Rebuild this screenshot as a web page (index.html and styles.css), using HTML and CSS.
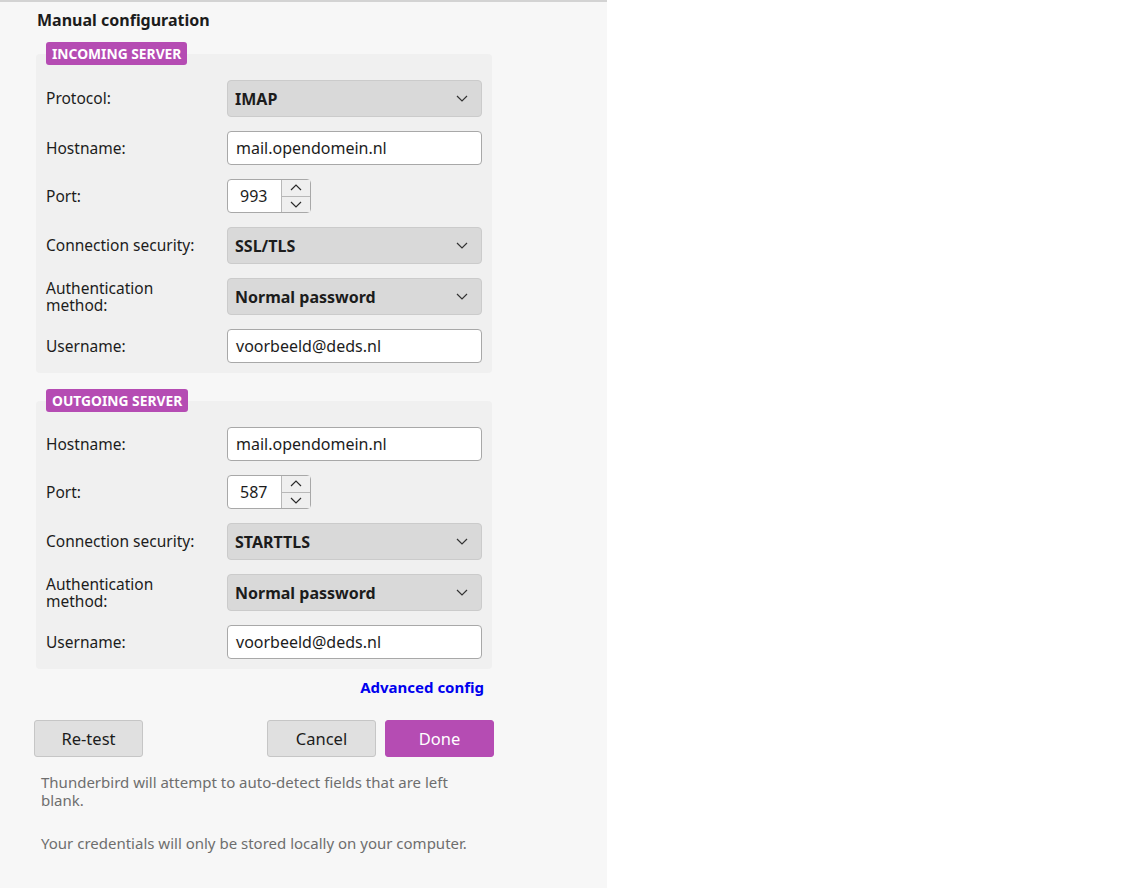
FILE: index.html
```html
<!DOCTYPE html>
<html lang="en">
<head>
    <meta charset="UTF-8">
    <title>Manual configuration</title>
    <link rel="stylesheet" href="styles.css">
</head>
<body>
    <div class="panel">
        <h2 class="title">Manual configuration</h2>

        <fieldset class="server-box">
            <legend class="badge">INCOMING SERVER</legend>
            <div class="rows">
                <div class="row">
                    <label>Protocol:</label>
                    <div class="select">IMAP
                        <svg class="chev" viewBox="0 0 12 7"><path d="M1 1l5 5 5-5"/></svg>
                    </div>
                </div>
                <div class="row">
                    <label>Hostname:</label>
                    <div class="input">mail.opendomein.nl</div>
                </div>
                <div class="row">
                    <label>Port:</label>
                    <div class="port">
                        <span class="port-val">993</span>
                        <span class="spin">
                            <span class="spin-btn"><svg viewBox="0 0 12 7"><path d="M1 6l5-5 5 5"/></svg></span>
                            <span class="spin-btn"><svg viewBox="0 0 12 7"><path d="M1 1l5 5 5-5"/></svg></span>
                        </span>
                    </div>
                </div>
                <div class="row">
                    <label>Connection security:</label>
                    <div class="select">SSL/TLS
                        <svg class="chev" viewBox="0 0 12 7"><path d="M1 1l5 5 5-5"/></svg>
                    </div>
                </div>
                <div class="row">
                    <label>Authentication<br>method:</label>
                    <div class="select">Normal password
                        <svg class="chev" viewBox="0 0 12 7"><path d="M1 1l5 5 5-5"/></svg>
                    </div>
                </div>
                <div class="row">
                    <label>Username:</label>
                    <div class="input">voorbeeld@deds.nl</div>
                </div>
            </div>
        </fieldset>

        <fieldset class="server-box outgoing">
            <legend class="badge">OUTGOING SERVER</legend>
            <div class="rows">
                <div class="row">
                    <label>Hostname:</label>
                    <div class="input">mail.opendomein.nl</div>
                </div>
                <div class="row">
                    <label>Port:</label>
                    <div class="port">
                        <span class="port-val">587</span>
                        <span class="spin">
                            <span class="spin-btn"><svg viewBox="0 0 12 7"><path d="M1 6l5-5 5 5"/></svg></span>
                            <span class="spin-btn"><svg viewBox="0 0 12 7"><path d="M1 1l5 5 5-5"/></svg></span>
                        </span>
                    </div>
                </div>
                <div class="row">
                    <label>Connection security:</label>
                    <div class="select">STARTTLS
                        <svg class="chev" viewBox="0 0 12 7"><path d="M1 1l5 5 5-5"/></svg>
                    </div>
                </div>
                <div class="row">
                    <label>Authentication<br>method:</label>
                    <div class="select">Normal password
                        <svg class="chev" viewBox="0 0 12 7"><path d="M1 1l5 5 5-5"/></svg>
                    </div>
                </div>
                <div class="row">
                    <label>Username:</label>
                    <div class="input">voorbeeld@deds.nl</div>
                </div>
            </div>
        </fieldset>

        <div class="advanced"><a href="#">Advanced config</a></div>

        <div class="buttons">
            <button class="btn">Re-test</button>
            <div class="btn-group">
                <button class="btn">Cancel</button>
                <button class="btn primary">Done</button>
            </div>
        </div>

        <p class="note">Thunderbird will attempt to auto-detect fields that are left blank.</p>
        <p class="note">Your credentials will only be stored locally on your computer.</p>
    </div>
</body>
</html>
```

FILE: styles.css
```css
:root {
    --accent: #b54cb3;
    --panel-bg: #f7f7f7;
    --box-bg: #f0f0f0;
}

body {
    margin: 0;
    background: #fff;
    font-family: "Noto Sans", "Open Sans", sans-serif;
    color: #1c1c1c;
}

.panel {
    width: 607px;
    min-height: 888px;
    background: var(--panel-bg);
    border-top: 2px solid #d3d3d3;
    box-sizing: border-box;
    padding: 8px 0 0 36px;
}

.title {
    margin: 0 0 0 1px;
    font-size: 16px;
    font-weight: 700;
    line-height: 20px;
}

.server-box {
    margin: 12px 0 0;
    padding: 0 10px 10px;
    width: 456px;
    box-sizing: border-box;
    border: none;
    border-radius: 4px;
    background: var(--box-bg);
}

.server-box.outgoing {
    margin-top: 16px;
}

.badge {
    background: var(--accent);
    color: #fff;
    font-size: 13.8px;
    font-weight: 700;
    line-height: 23px;
    padding: 0 6px;
    border-radius: 3px;
    margin-left: 0;
}

.rows {
    display: flex;
    flex-direction: column;
    gap: 14px;
    margin-top: 15px;
}

.row {
    display: flex;
    align-items: center;
    font-size: 16px;
}

.row label {
    width: 181px;
    font-size: 15.5px;
    line-height: 17px;
}

.select {
    width: 255px;
    height: 37px;
    box-sizing: border-box;
    background: #d9d9d9;
    border: 1px solid #cbcbcb;
    border-radius: 4px;
    display: flex;
    align-items: center;
    justify-content: space-between;
    padding: 0 13px 0 7px;
    font-weight: 700;
}

.chev {
    width: 12px;
    height: 7px;
    fill: none;
    stroke: #333;
    stroke-width: 1.2;
}

.input {
    width: 255px;
    height: 34px;
    box-sizing: border-box;
    background: #fff;
    border: 1px solid #a8a8a8;
    border-radius: 4px;
    display: flex;
    align-items: center;
    padding: 0 8px;
}

.port {
    width: 84px;
    height: 34px;
    box-sizing: border-box;
    background: #fff;
    border: 1px solid #a8a8a8;
    border-radius: 4px;
    display: flex;
    align-items: stretch;
}

.port-val {
    flex: 1;
    display: flex;
    align-items: center;
    padding-left: 12px;
}

.spin {
    width: 28px;
    display: flex;
    flex-direction: column;
    border-left: 1px solid #b8b8b8;
}

.spin-btn {
    flex: 1;
    display: flex;
    align-items: center;
    justify-content: center;
    background: #efefef;
}

.spin-btn + .spin-btn {
    border-top: 1px solid #b8b8b8;
}

.spin-btn svg {
    width: 12px;
    height: 7px;
    fill: none;
    stroke: #2a2a2a;
    stroke-width: 1.2;
}

.advanced {
    width: 448px;
    text-align: right;
    margin-top: 8px;
    line-height: 20px;
}

.advanced a {
    color: #0000ee;
    font-weight: 700;
    font-size: 15px;
    text-decoration: none;
}

.buttons {
    width: 460px;
    margin: 23px 0 0 -2px;
    display: flex;
    justify-content: space-between;
}

.btn-group {
    display: flex;
    gap: 9px;
}

.btn {
    width: 109px;
    height: 37px;
    font-family: inherit;
    font-size: 16.5px;
    color: #1c1c1c;
    background: #e0e0e0;
    border: 1px solid #c6c6c6;
    border-radius: 3px;
}

.btn.primary {
    background: var(--accent);
    border-color: var(--accent);
    color: #fff;
}

.note {
    width: 450px;
    margin: 16px 0 0 5px;
    font-size: 15px;
    line-height: 18px;
    color: #6e6e6e;
}

.note + .note {
    margin-top: 25px;
}
```
